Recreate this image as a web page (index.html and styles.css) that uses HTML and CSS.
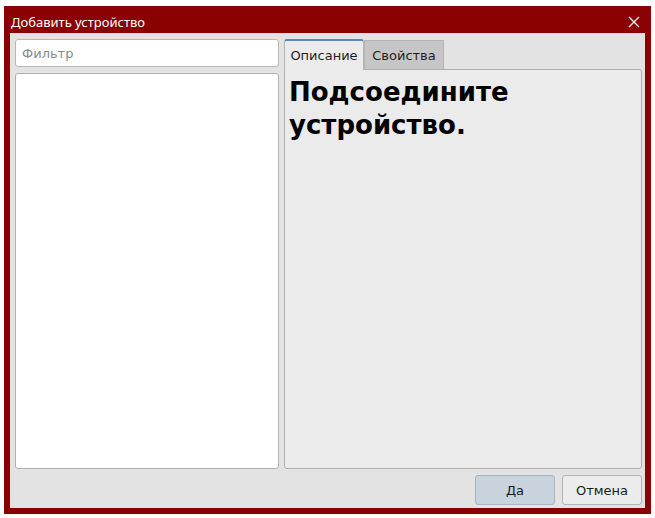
FILE: index.html
```html
<!DOCTYPE html>
<html lang="ru">
<head>
<meta charset="utf-8">
<title>Добавить устройство</title>
<link rel="stylesheet" href="styles.css">
</head>
<body>
<div class="window">
  <div class="titlebar">
    <span class="title">Добавить устройство</span>
    <svg class="close" width="12" height="12" viewBox="0 0 12 12"><path d="M1 1L11 11M11 1L1 11" stroke="#ffffff" stroke-width="1.3" fill="none"/></svg>
  </div>
  <div class="content">
    <div class="main">
      <div class="left">
        <div class="filter">Фильтр</div>
        <div class="list"></div>
      </div>
      <div class="right">
        <div class="tabs">
          <div class="tab active">Описание</div>
          <div class="tab">Свойства</div>
        </div>
        <div class="panel">
          <h1 class="heading">Подсоедините устройство.</h1>
        </div>
      </div>
    </div>
    <div class="buttons">
      <div class="btn default">Да</div>
      <div class="btn">Отмена</div>
    </div>
  </div>
</div>
</body>
</html>
```
FILE: styles.css
```css
html, body { margin: 0; padding: 0; background: #ffffff; }
body { font-family: "DejaVu Sans", sans-serif; font-size: 13px; color: #1a1a1a; }
.window {
  margin: 6px 4px 0 4px;
  width: 647px;
  height: 508px;
  box-sizing: border-box;
  background: #8b0000;
  padding: 0 6px 6px 6px;
  display: flex;
  flex-direction: column;
}
.titlebar {
  height: 27px;
  display: flex;
  align-items: center;
  justify-content: space-between;
  color: #ffffff;
  padding: 0 5px 0 1px;
}
.title { font-family: "Noto Sans", "DejaVu Sans", sans-serif; font-size: 13px; padding-top: 4px; }
.close { margin-top: 4px; }
.content {
  flex: 1;
  background: #e3e3e3;
  padding: 6px 3px 3px 5px;
  display: flex;
  flex-direction: column;
  min-height: 0;
}
.main { flex: 1; display: flex; gap: 5px; min-height: 0; }
.left { width: 264px; display: flex; flex-direction: column; gap: 6px; }
.filter {
  height: 28px;
  box-sizing: border-box;
  background: #ffffff;
  border: 1px solid #b8b8b8;
  border-radius: 3px;
  color: #8a8a8a;
  padding: 0 6px;
  display: flex;
  align-items: center;
}
.list {
  flex: 1;
  background: #ffffff;
  border: 1px solid #b0b0b0;
  border-radius: 3px;
}
.right { flex: 1; display: flex; flex-direction: column; }
.tabs { display: flex; align-items: flex-end; height: 30px; }
.tab {
  width: 80px;
  box-sizing: border-box;
  text-align: center;
  height: 29px;
  line-height: 29px;
  background: #c6c6c6;
  border: 1px solid #b4b4b4;
  border-bottom: none;
  color: #1e1e1e;
}
.tab.active {
  height: 31px;
  line-height: 29px;
  background: #ebebeb;
  border-top: 2px solid #5a86b8;
  border-radius: 3px 3px 0 0;
  margin-bottom: -1px;
  position: relative;
  z-index: 1;
}
.panel {
  flex: 1;
  background: #ebebeb;
  border: 1px solid #b0b0b0;
  border-radius: 0 3px 3px 3px;
  padding: 6px 4px;
}
.heading {
  margin: 0;
  font-size: 26px;
  font-weight: bold;
  line-height: 33px;
  color: #000000;
  width: 250px;
}
.buttons {
  height: 36px;
  display: flex;
  justify-content: flex-end;
  align-items: flex-end;
  gap: 7px;
}
.btn {
  width: 80px;
  height: 30px;
  box-sizing: border-box;
  border: 1px solid #b4b4b4;
  border-radius: 3px;
  background: #ececec;
  display: flex;
  align-items: center;
  justify-content: center;
}
.btn.default { background: #c9d3dd; border-color: #a9b4bf; }
```
